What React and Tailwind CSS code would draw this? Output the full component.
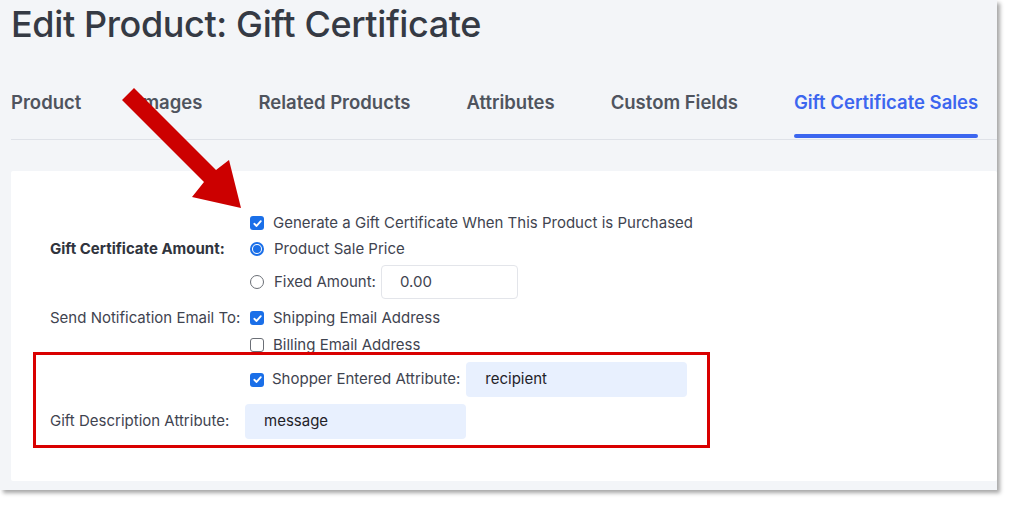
import React from "react";

function Check({ checked }) {
  return checked ? (
    <span className="inline-flex w-[14px] h-[14px] rounded-[3px] bg-[#1a6fe8] items-center justify-center shrink-0">
      <svg width="11" height="11" viewBox="0 0 12 12">
        <path d="M2.5 6.3 L5 8.7 L9.6 3.4" fill="none" stroke="white" strokeWidth="2" strokeLinecap="round" strokeLinejoin="round" />
      </svg>
    </span>
  ) : (
    <span className="inline-block w-[14px] h-[14px] rounded-[3px] border border-[#6b6f76] bg-white shrink-0" />
  );
}

function Radio({ checked }) {
  return checked ? (
    <span className="inline-flex w-[14px] h-[14px] rounded-full border-[2px] border-[#1a6fe8] items-center justify-center shrink-0">
      <span className="w-[8px] h-[8px] rounded-full bg-[#1a6fe8]" />
    </span>
  ) : (
    <span className="inline-block w-[14px] h-[14px] rounded-full border border-[#6b6f76] bg-white shrink-0" />
  );
}

export default function App() {
  const tabs = ["Product", "Images", "Related Products", "Attributes", "Custom Fields"];
  return (
    <div className="w-[1024px] h-[506px] bg-white overflow-hidden" style={{ fontFamily: "Inter, 'Noto Sans', sans-serif" }}>
      <div className="relative w-[997px] h-[490px] bg-[#f3f5f8] shadow-[3px_3px_4px_rgba(0,0,0,0.35)] overflow-hidden">
        <h1 className="pl-[11px] pt-[2px] text-[36px] leading-[44px] font-medium text-[#353a44] tracking-[-0.38px]">
          Edit Product: Gift Certificate
        </h1>
        <div className="mt-[43px] ml-[11px] flex gap-[56px] border-b border-[#dfe2e8] text-[18.5px] font-semibold text-[#4f545e]">
          {tabs.map((t) => (
            <div key={t} className="h-[50px] pt-[1px] leading-[24px]">{t}</div>
          ))}
          <div className="relative h-[50px] pt-[1px] leading-[24px] text-[#3c66ef]">
            Gift Certificate Sales
            <span className="absolute left-0 right-0 bottom-[1px] h-[4px] rounded-full bg-[#3c66ef]" />
          </div>
        </div>

        <div className="relative mt-[31px] ml-[11px] bg-white rounded-[2px] pt-[39px] pb-[42px] pl-[39px] text-[15px] text-[#3f4450]">
          <div className="flex h-[26px] items-center">
            <div className="w-[200px]" />
            <Check checked />
            <span className="ml-[9px]">Generate a Gift Certificate When This Product is Purchased</span>
          </div>
          <div className="flex h-[26px] items-center">
            <div className="w-[200px] font-bold text-[#30343d]">Gift Certificate Amount:</div>
            <Radio checked />
            <span className="ml-[10px]">Product Sale Price</span>
          </div>
          <div className="flex h-[34px] mt-[3px] items-center">
            <div className="w-[200px]" />
            <Radio />
            <span className="ml-[10px]">Fixed Amount:</span>
            <div className="ml-[5px] w-[137px] h-[34px] border border-[#e3e5ea] rounded-[4px] bg-white flex items-center pl-[18px]">0.00</div>
          </div>
          <div className="flex h-[28px] mt-[5px] items-center">
            <div className="w-[200px]">Send Notification Email To:</div>
            <Check checked />
            <span className="ml-[9px]">Shipping Email Address</span>
          </div>
          <div className="flex h-[26px] items-center">
            <div className="w-[200px]" />
            <Check />
            <span className="ml-[9px]">Billing Email Address</span>
          </div>
          <div className="flex h-[35px] mt-[4px] items-center">
            <div className="w-[200px]" />
            <Check checked />
            <span className="ml-[8px]">Shopper Entered Attribute:</span>
            <div className="ml-[6px] w-[221px] h-[35px] rounded-[4px] bg-[#e8f0fe] flex items-center pl-[19px] text-[#1f2228]">recipient</div>
          </div>
          <div className="flex h-[35px] mt-[7px] items-center">
            <div className="w-[195px]">Gift Description Attribute:</div>
            <div className="w-[221px] h-[35px] rounded-[4px] bg-[#e8f0fe] flex items-center pl-[19px] text-[#1f2228]">message</div>
          </div>

          <div className="absolute left-[22px] top-[181px] w-[677px] h-[96px] border-[3px] border-[#d90000]" />
        </div>

        <svg className="absolute left-0 top-0 pointer-events-none" width="997" height="490" viewBox="0 0 997 490">
          <polygon
            points="122,100 134,88 216,170 229,160 241,208 192,197 204,182"
            fill="#cc0000"
          />
        </svg>
      </div>
    </div>
  );
}
